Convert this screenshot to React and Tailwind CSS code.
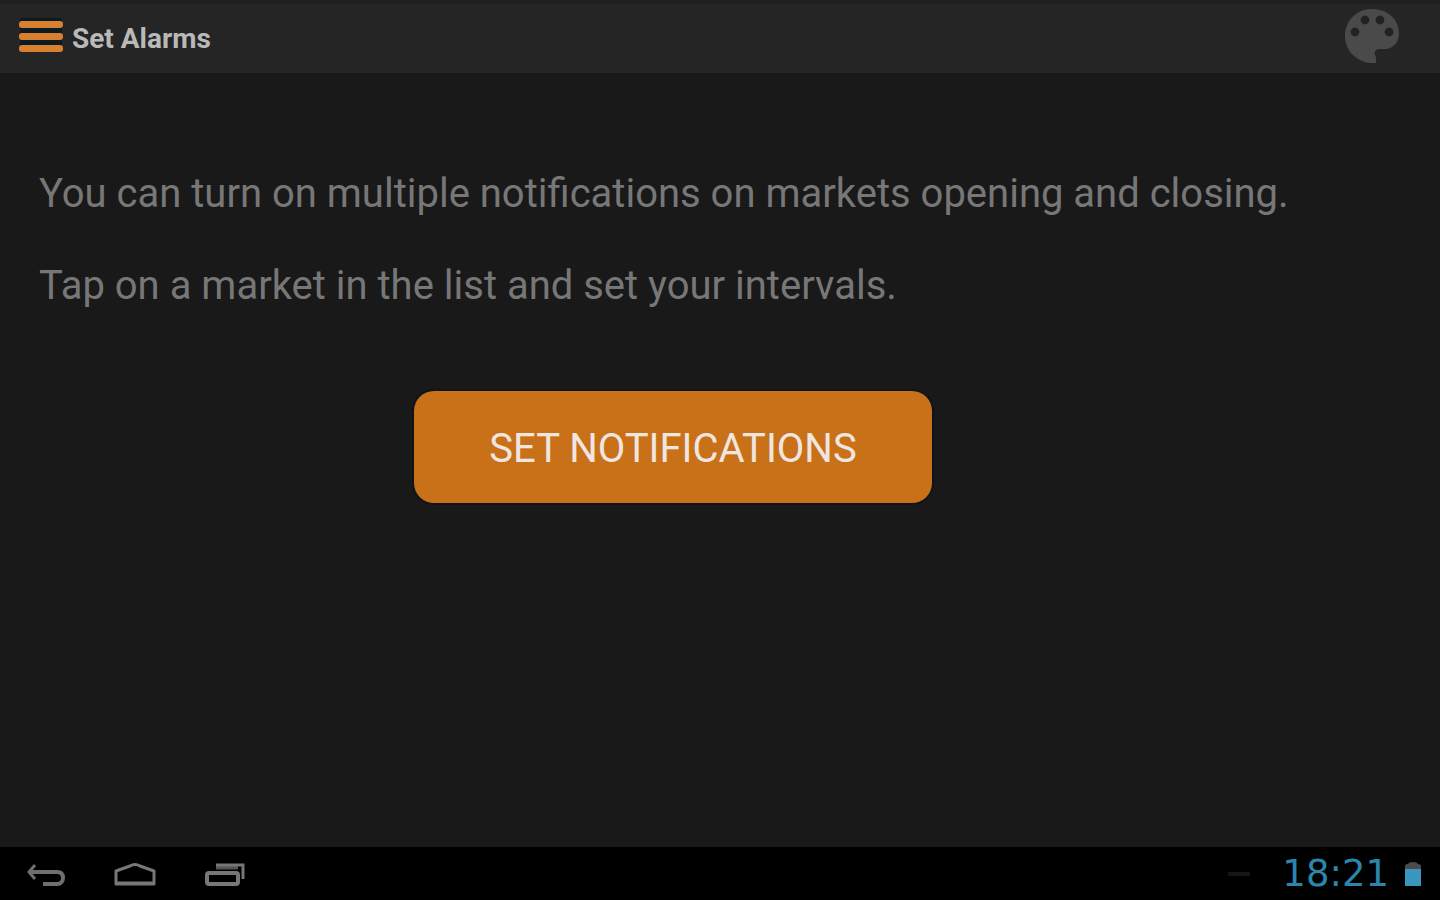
function MenuIcon() {
  return (
    <svg width="46" height="42" viewBox="0 0 46 42" aria-hidden="true">
      <rect x="2" y="0" width="42" height="34" rx="2" fill="#0c1a21" />
      <g fill="#d8802f">
        <rect x="1" y="3" width="44" height="7" rx="3" />
        <rect x="1" y="15" width="44" height="7" rx="3" />
        <rect x="1" y="27" width="44" height="7" rx="3" />
      </g>
    </svg>
  );
}

function PaletteIcon() {
  return (
    <svg width="56" height="62" viewBox="0 0 56 62" aria-hidden="true">
      <path
        fill="#4a4a4a"
        d="M28 1C12.500 1 1 13 1 28C1 42 12 54 27 55H32V50L30.500 45Q31 41 36 41H42C50 40 55 34 55 25C55 11 43 1 28 1Z"
      />
      <g fill="#222222">
        <circle cx="11" cy="24" r="4.400" />
        <circle cx="21" cy="12" r="4.400" />
        <circle cx="36" cy="12" r="4.400" />
        <circle cx="45" cy="24" r="4.400" />
      </g>
    </svg>
  );
}

function BackIcon() {
  return (
    <svg width="40" height="28" viewBox="0 0 40 28" fill="none" stroke="#6f6f6f" strokeWidth="4" aria-hidden="true">
      <path d="M9 5L3 12L9 19" strokeWidth="3" />
      <path d="M3 12H31C36 12 37 15 37 18C37 21 35 24 31 24H17" />
    </svg>
  );
}

function HomeIcon() {
  return (
    <svg width="42" height="28" viewBox="0 0 42 28" fill="none" stroke="#777777" strokeWidth="3" strokeLinejoin="round" aria-hidden="true">
      <path d="M2 24V11L16 6Q21 3 26 6L40 11V24Z" />
      <path d="M3 23H39" />
    </svg>
  );
}

function RecentIcon() {
  return (
    <svg width="42" height="28" viewBox="0 0 42 28" fill="none" stroke="#777777" strokeWidth="4" aria-hidden="true">
      <rect x="3" y="13" width="31" height="11" rx="2" />
      <path d="M12 7H34" stroke="#555555" strokeWidth="5" />
      <path d="M12 5H39V19" strokeWidth="3" />
    </svg>
  );
}

function BatteryIcon() {
  return (
    <svg width="16" height="24" viewBox="0 0 16 24" aria-hidden="true">
      <path d="M0 8V4Q0 2 3 2Q4 0 8 0Q12 0 13 2Q16 2 16 4V8Z" fill="#4b4b4b" />
      <rect y="7" width="16" height="17" fill="#3b96bf" />
    </svg>
  );
}

export default function App() {
  return (
    <div className="flex min-h-screen flex-col bg-[#191919] font-['Roboto',sans-serif]">
      <header className="flex h-[73px] items-center border-t-4 border-[#1f1f1f] bg-[#252525] pr-10 pl-[18px]">
        <button type="button" aria-label="Menu">
          <MenuIcon />
        </button>
        <h1 className="ml-2 text-[28px] leading-8 font-bold text-[#b9b9b9]">Set Alarms</h1>
        <button type="button" aria-label="Theme" className="ml-auto">
          <PaletteIcon />
        </button>
      </header>

      <main className="flex grow flex-col pt-[98px] pr-10 pl-[39px] text-[40px] leading-[46px] text-[#777777]">
        <p>You can turn on multiple notifications on markets opening and closing.</p>
        <p className="mt-[46px]">Tap on a market in the list and set your intervals.</p>
        <div className="mt-[82px] flex justify-center pr-[93px]">
          <button
            type="button"
            className="h-28 w-[518px] rounded-[20px] bg-[#c87119] pt-1 text-[#f0e6e0] ring-2 ring-[#101418]"
          >
            SET NOTIFICATIONS
          </button>
        </div>
      </main>

      <footer className="flex h-[53px] items-center bg-black pr-[19px] pl-[26px]">
        <nav className="flex items-center gap-12">
          <button type="button" aria-label="Back">
            <BackIcon />
          </button>
          <button type="button" aria-label="Home">
            <HomeIcon />
          </button>
          <button type="button" aria-label="Recent apps">
            <RecentIcon />
          </button>
        </nav>
        <div className="ml-auto flex items-center">
          <span className="mr-8 h-1 w-[22px] bg-[#151515]" />
          <time className="font-['DejaVu_Sans',sans-serif] text-[37px] leading-10 text-[#2b86ad]">18:21</time>
          <span className="ml-4">
            <BatteryIcon />
          </span>
        </div>
      </footer>
    </div>
  );
}
